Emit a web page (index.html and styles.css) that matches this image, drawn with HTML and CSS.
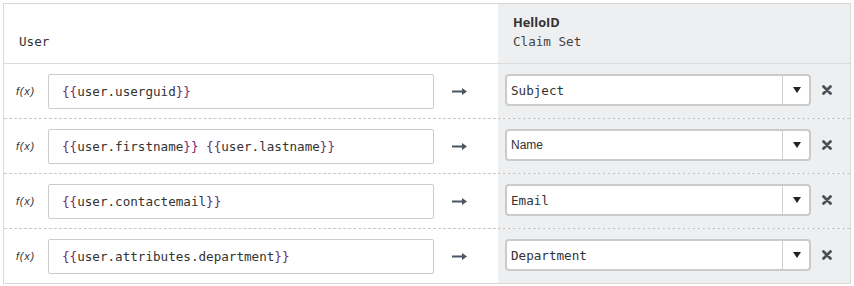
FILE: index.html
```html
<!DOCTYPE html>
<html>
<head>
<meta charset="utf-8">
<link rel="stylesheet" href="styles.css">
</head>
<body>
<div class="mapping">
  <div class="head">
    <div class="head-user">User</div>
    <div class="head-claim">
      <div class="brand">HelloID</div>
      <div class="sub">Claim Set</div>
    </div>
  </div>

  <div class="row">
    <div class="fx">f(x)</div>
    <div class="expr"><span class="txt"><span class="br">{{</span>user.userguid<span class="br">}}</span></span></div>
    <div class="arrow"><svg width="15" height="7" viewBox="0 0 15 7"><rect x="0" y="2.5" width="11" height="2" fill="#4b5563"/><path d="M10 0 L15 3.5 L10 7 Z" fill="#4b5563"/></svg></div>
    <div class="claim">
      <div class="select"><span class="val">Subject</span><span class="btn"><i class="caret"></i></span></div>
      <span class="del"><svg width="10" height="10" viewBox="0 0 10 10"><path d="M1.5 1.5 L8.5 8.5 M8.5 1.5 L1.5 8.5" stroke="#4b5058" stroke-width="2.8" stroke-linecap="round"/></svg></span>
    </div>
  </div>

  <div class="row">
    <div class="fx">f(x)</div>
    <div class="expr"><span class="txt"><span class="br">{{</span>user.firstname<span class="br">}}</span> <span class="br">{{</span>user.lastname<span class="br">}}</span></span></div>
    <div class="arrow"><svg width="15" height="7" viewBox="0 0 15 7"><rect x="0" y="2.5" width="11" height="2" fill="#4b5563"/><path d="M10 0 L15 3.5 L10 7 Z" fill="#4b5563"/></svg></div>
    <div class="claim">
      <div class="select"><span class="val sans">Name</span><span class="btn"><i class="caret"></i></span></div>
      <span class="del"><svg width="10" height="10" viewBox="0 0 10 10"><path d="M1.5 1.5 L8.5 8.5 M8.5 1.5 L1.5 8.5" stroke="#4b5058" stroke-width="2.8" stroke-linecap="round"/></svg></span>
    </div>
  </div>

  <div class="row">
    <div class="fx">f(x)</div>
    <div class="expr"><span class="txt"><span class="br">{{</span>user.contactemail<span class="br">}}</span></span></div>
    <div class="arrow"><svg width="15" height="7" viewBox="0 0 15 7"><rect x="0" y="2.5" width="11" height="2" fill="#4b5563"/><path d="M10 0 L15 3.5 L10 7 Z" fill="#4b5563"/></svg></div>
    <div class="claim">
      <div class="select"><span class="val">Email</span><span class="btn"><i class="caret"></i></span></div>
      <span class="del"><svg width="10" height="10" viewBox="0 0 10 10"><path d="M1.5 1.5 L8.5 8.5 M8.5 1.5 L1.5 8.5" stroke="#4b5058" stroke-width="2.8" stroke-linecap="round"/></svg></span>
    </div>
  </div>

  <div class="row">
    <div class="fx">f(x)</div>
    <div class="expr"><span class="txt"><span class="br">{{</span>user.attributes.department<span class="br">}}</span></span></div>
    <div class="arrow"><svg width="15" height="7" viewBox="0 0 15 7"><rect x="0" y="2.5" width="11" height="2" fill="#4b5563"/><path d="M10 0 L15 3.5 L10 7 Z" fill="#4b5563"/></svg></div>
    <div class="claim">
      <div class="select"><span class="val">Department</span><span class="btn"><i class="caret"></i></span></div>
      <span class="del"><svg width="10" height="10" viewBox="0 0 10 10"><path d="M1.5 1.5 L8.5 8.5 M8.5 1.5 L1.5 8.5" stroke="#4b5058" stroke-width="2.8" stroke-linecap="round"/></svg></span>
    </div>
  </div>
</div>
</body>
</html>
```

FILE: styles.css
```css
html, body {
  margin: 0;
  padding: 0;
  background: #fff;
}
body {
  padding: 3px 0 0 3px;
  font-family: "DejaVu Sans Mono", "Liberation Mono", monospace;
  color: #333;
}
.mapping {
  width: 846px;
  border: 1px solid #d9d9d9;
  background: #fff;
}
.head {
  display: grid;
  grid-template-columns: 494px 1fr;
  height: 59px;
  border-bottom: 1px solid #dcdcdc;
}
.head-user {
  align-self: end;
  padding: 0 0 11px 15px;
  font-size: 12.6px;
  line-height: 20px;
  color: #333;
}
.head-claim {
  background: #eeeff1;
  padding: 8px 15px 11px 15px;
}
.brand {
  font-family: "Open Sans", "Liberation Sans", sans-serif;
  font-weight: 700;
  font-size: 12.8px;
  line-height: 20px;
  color: #333;
}
.sub {
  font-size: 12.6px;
  line-height: 20px;
  color: #444;
}
.row {
  display: grid;
  grid-template-columns: 44px 386px 64px 1fr;
  height: 54px;
  border-bottom: 1px dashed #c8c8c8;
}
.row:last-child {
  border-bottom: none;
}
.fx {
  align-self: center;
  padding-left: 12px;
  font-family: "Liberation Sans", sans-serif;
  font-style: italic;
  font-size: 11px;
  letter-spacing: 0.8px;
  color: #333;
}
.expr {
  align-self: center;
  border: 1px solid #cccccc;
  border-radius: 2px;
  box-sizing: border-box;
  height: 35px;
  display: flex;
  align-items: center;
  padding-left: 13px;
  font-size: 12.6px;
  color: #333;
}
.txt {
  white-space: pre;
}
.br {
  color: #6e2a72;
}
.arrow {
  align-self: center;
  padding-left: 18px;
  display: flex;
  align-items: center;
}
.claim {
  background: #eeeff1;
  display: flex;
  align-items: center;
  padding-left: 7px;
}
.select {
  width: 306px;
  height: 32px;
  box-sizing: border-box;
  border: 2px solid #cbcbcb;
  border-radius: 4px;
  background: #fff;
  display: flex;
  align-items: stretch;
  margin-top: -2px;
}
.val {
  flex: 1;
  display: flex;
  align-items: center;
  padding-left: 4px;
  font-size: 12.6px;
  color: #333;
}
.val.sans {
  font-family: "Liberation Sans", sans-serif;
  font-size: 12px;
}
.btn {
  width: 26px;
  border-left: 1px solid #d0d0d0;
  display: flex;
  align-items: center;
  justify-content: center;
}
.caret {
  width: 0;
  height: 0;
  border-left: 4px solid transparent;
  border-right: 4px solid transparent;
  border-top: 6px solid #222;
  margin-left: 1px;
}
.del {
  margin-left: 11px;
  display: flex;
  align-items: center;
  margin-top: -2px;
}
```
